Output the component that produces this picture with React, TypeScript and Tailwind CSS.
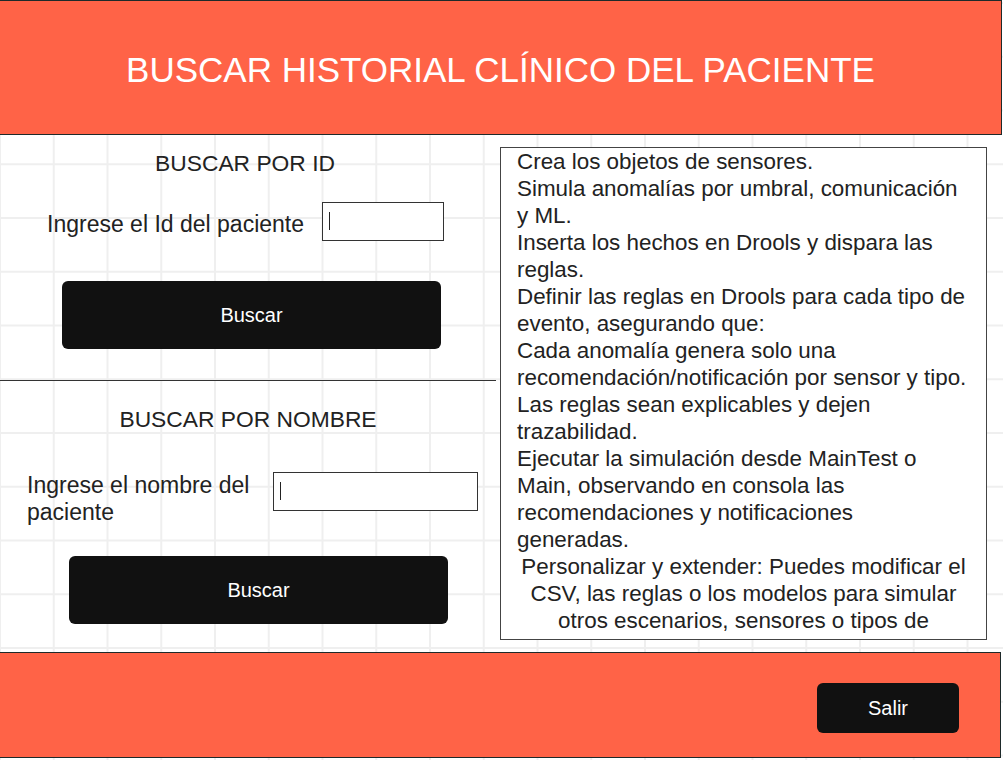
import React from "react";

const Caret = () => <span className="mt-[9px] ml-[6px] block h-[18px] w-px bg-[#222]" />;

const BuscarButton = ({ className }: { className: string }) => (
    <button className={"flex h-[68px] w-[379px] items-center justify-center rounded-md bg-[#111] text-[20px] text-white " + className}>
        Buscar
    </button>
);

const pasos = [
    "Crea los objetos de sensores.",
    "Simula anomalías por umbral, comunicación y ML.",
    "Inserta los hechos en Drools y dispara las reglas.",
    "Definir las reglas en Drools para cada tipo de evento, asegurando que:",
    "Cada anomalía genera solo una recomendación/notificación por sensor y tipo.",
    "Las reglas sean explicables y dejen trazabilidad.",
    "Ejecutar la simulación desde MainTest o Main, observando en consola las recomendaciones y notificaciones generadas.",
];

export default function App() {
    return (
        <div className="h-[760px] w-[1003px] overflow-hidden bg-white bg-[linear-gradient(to_right,#efefef_2px,transparent_2px),linear-gradient(to_bottom,#efefef_2px,transparent_2px)] bg-size-[53.75px_53.75px] bg-position-[-1px_2px] font-['Liberation_Sans',Arial,sans-serif] text-[#222]">
            {/* Header */}
            <header className="flex h-[135px] w-[1002px] items-center justify-center border-y border-r border-[#1e2a2a] bg-[#ff6347] pt-[3px]">
                <h1 className="text-[35px] leading-none text-white">BUSCAR HISTORIAL CLÍNICO DEL PACIENTE</h1>
            </header>

            <main className="flex h-[517px]">
                {/* Left column */}
                <div className="flex w-[496px] flex-col">
                    <h2 className="mt-[15px] pr-[6px] text-center text-[22.8px] leading-[27px]">BUSCAR POR ID</h2>

                    <div className="mt-[25px] flex items-start pl-[47px]">
                        <label className="mt-[9px] w-[275px] text-[23px] leading-[27px]">Ingrese el Id del paciente</label>
                        <div className="flex h-[39px] w-[122px] border border-[#333] bg-white">
                            <Caret />
                        </div>
                    </div>

                    <BuscarButton className="ml-[62px] mt-[40px]" />

                    <hr className="mt-[31px] border-t border-[#333]" />

                    <h2 className="mt-[25px] text-center text-[22.8px] leading-[27px]">BUSCAR POR NOMBRE</h2>

                    <div className="mt-[39px] flex items-start pl-[27px]">
                        <label className="w-[246px] text-[23px] leading-[27px]">Ingrese el nombre del paciente</label>
                        <div className="flex h-[39px] w-[205px] border border-[#333] bg-white">
                            <Caret />
                        </div>
                    </div>

                    <BuscarButton className="ml-[69px] mt-[30px]" />
                </div>

                {/* Right column */}
                <div className="ml-[4px] mt-[12px] h-[493px] w-[487px] overflow-hidden border border-[#444] bg-white px-4 text-[22.4px] leading-[27px]">
                    {pasos.map((p) => (
                        <div key={p}>{p}</div>
                    ))}
                    <div className="text-center">
                        Personalizar y extender: Puedes modificar el CSV, las reglas o los modelos para simular otros escenarios, sensores o tipos de notificación.
                    </div>
                </div>
            </main>

            {/* Footer */}
            <footer className="flex h-[106px] w-[1001px] items-start justify-end border-y border-r border-[#1e2a2a] bg-[#ff6347] pr-[41px] pt-[30px]">
                <button className="h-[50px] w-[142px] rounded-md bg-[#111] text-[20px] text-white">Salir</button>
            </footer>
        </div>
    );
}
